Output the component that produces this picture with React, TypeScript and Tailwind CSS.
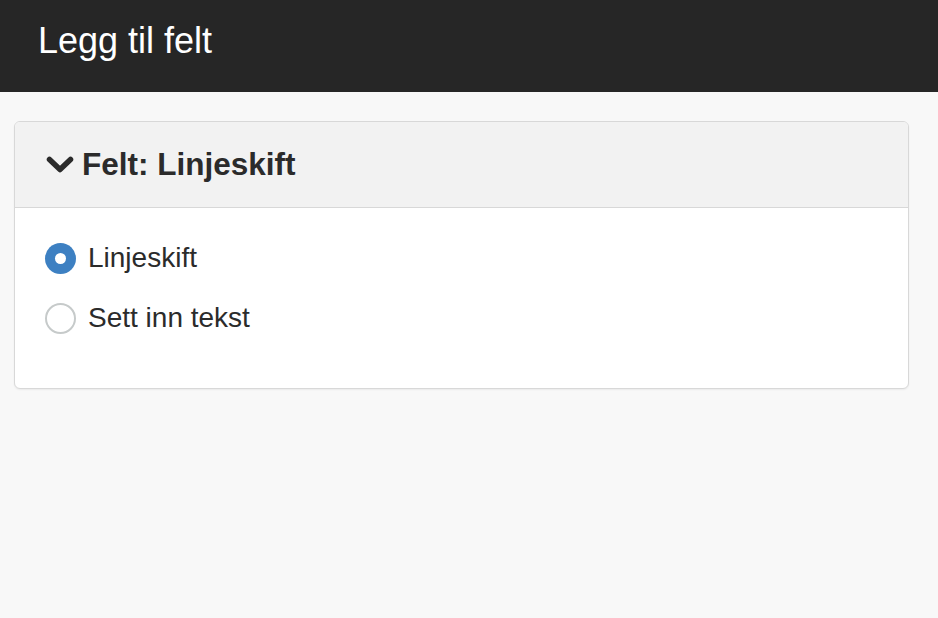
import { useState } from "react";

const options = ["Linjeskift", "Sett inn tekst"];

function Radio({ checked }: { checked: boolean }) {
  return checked ? (
    <span className="flex h-[31px] w-[31px] shrink-0 items-center justify-center rounded-full bg-[#3d80c2]">
      <span className="h-[11px] w-[11px] rounded-full bg-white" />
    </span>
  ) : (
    <span className="h-[31px] w-[31px] shrink-0 rounded-full border-2 border-[#c6caca] bg-white" />
  );
}

export default function App() {
  const [selected, setSelected] = useState(0);

  return (
    <div
      className="min-h-[618px] bg-[#f8f8f8] text-[#2b2b2b]"
      style={{ fontFamily: '"Liberation Sans", Arial, sans-serif' }}
    >
      <header className="h-[92px] bg-[#262626] pl-[38px] pt-[23px]">
        <h1 className="text-[36px] leading-[36px] text-white">Legg til felt</h1>
      </header>

      <section className="ml-[14px] mt-[29px] w-[895px] overflow-hidden rounded-[6px] border border-[#d8d8d8] bg-white shadow-[0_1px_2px_rgba(0,0,0,0.06)]">
        <div className="flex h-[86px] items-start gap-[8px] border-b border-[#d8d8d8] bg-[#f2f2f2] pl-[31px] pt-[26px]">
          <svg
            width="28"
            height="20"
            viewBox="0 0 28 20"
            className="mt-[7px] shrink-0"
            fill="none"
            stroke="#2b2b2b"
            strokeWidth="5.5"
            strokeLinecap="round"
            strokeLinejoin="round"
          >
            <path d="M3.5 4.5 L14 14.5 L24.5 4.5" />
          </svg>
          <h2 className="text-[31.5px] font-bold leading-[32px] text-[#2b2b2b]">Felt: Linjeskift</h2>
        </div>

        <div className="flex flex-col gap-[20px] pb-[50px] pl-[30px] pt-[30px]">
          {options.map((label, i) => (
            <label
              key={label}
              className="flex h-[40px] cursor-pointer items-center gap-[12px]"
              onClick={() => setSelected(i)}
            >
              <Radio checked={selected === i} />
              <span className="text-[28px] leading-[28px] text-[#2b2b2b]">{label}</span>
            </label>
          ))}
        </div>
      </section>
    </div>
  );
}
